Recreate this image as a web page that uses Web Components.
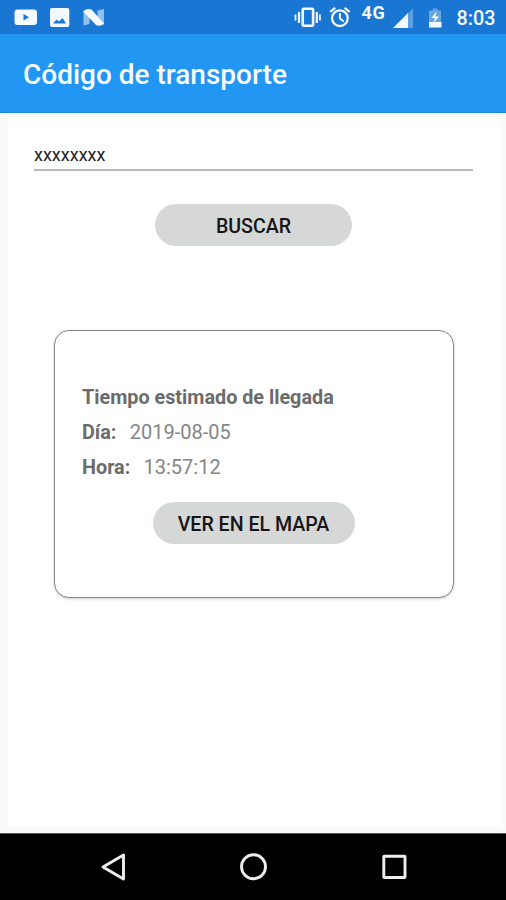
<!DOCTYPE html>
<html lang="es">
<head>
<meta charset="utf-8">
<title>Código de transporte</title>
<style>
body{margin:0;width:506px;height:900px;overflow:hidden;font-family:Roboto,"Noto Sans",sans-serif;background:#fafafa}
</style>
</head>
<body>
<transit-app></transit-app>
<script>
const define=(name,html)=>customElements.define(name,class extends HTMLElement{
  constructor(){super();this.attachShadow({mode:'open'}).innerHTML=html;}
});

define('status-bar',`<style>
:host{display:flex;height:34px;background:#1976d2;color:#f4f9ff;justify-content:space-between}
svg{display:block;flex:none}
.right{display:flex}
.net{font-size:18px;font-weight:700;line-height:26px;letter-spacing:.6px;width:29px}
.time{font-size:19.800px;font-weight:500;line-height:38px;width:49.500px}
</style>
<svg width="120" height="34" viewBox="0 0 120 34">
 <rect x="14.5" y="9.5" width="22.500" height="15.5" rx="3" fill="#f4f9ff"/><path d="M23.500 14v6.500l5.500-3.200z" fill="#1976d2"/>
 <rect x="50" y="8" width="19.300" height="19" rx="2" fill="#f4f9ff"/><path d="M53 23.500l3.500-4 2.500 2 3.500-3.500 3.500 5.500z" fill="#1976d2"/>
 <path d="M83.500 11h6v13l-6 1.500zM97.500 10.500l6.500-1.500v15.500h-6.500z" fill="#8fbfeb"/><path d="M83.500 11q3.500-3 8-1.500L104 23.500q-3.500 3.500-8 1.500L83.500 12z" fill="#f4f9ff"/>
</svg>
<div class="right">
<svg width="82" height="34" viewBox="280 0 82 34" fill="none" stroke="#f4f9ff">
 <rect x="302.700" y="8.700" width="10.400" height="17" rx="1" stroke-width="2.600"/><path d="M299 12v11M316.800 12v11" stroke-width="2.200"/><path d="M295.500 14.500v6M319.900 14.500v6" stroke-width="1.800"/>
 <circle cx="339.900" cy="18.200" r="7.800" stroke-width="2.300"/><path d="M339.900 13v5.500l4 3" stroke-width="2"/><path d="M330.200 11.800l5-4M349.600 11.800l-5-4" stroke-width="2.300"/>
</svg>
<div class="net">4G</div>
<svg width="66" height="34" viewBox="391 0 66 34">
 <path d="M407 14L413 8.500V28h-6z" fill="#5d9edf"/><path d="M393 28L408 13v15z" fill="#f4f9ff"/>
 <path d="M432.500 8.500h5v2h3.500v12h-12v-12h3.500z" fill="#68a6e2"/><path d="M429 22h12.500v5.500h-12.500z" fill="#f4f9ff"/><path d="M436.500 11.500l-5 6.500h3.500l-1.500 5 5.500-6.500h-3.500z" fill="#fff"/>
</svg>
<div class="time">8:03</div>
</div>`);

define('app-toolbar',`<style>
:host{display:flex;align-items:center;box-sizing:border-box;height:79px;padding:2px 23px 0;background:#2196f3;border-bottom:1px solid #1c86df;color:#f7fbff;font-size:28px;font-weight:500}
</style><slot></slot>`);

define('code-field',`<style>
:host{display:flex;align-items:flex-end;box-sizing:border-box;height:27px;padding-bottom:4px;border-bottom:2px solid #b9b9b9;color:#222;font-size:18px;line-height:20px}
</style><slot></slot>`);

define('pill-button',`<style>
:host{display:block}
button{display:block;width:100%;height:42px;padding:2px 0 0;border:0;border-radius:21px;background:#d6d8d7;color:#151515;font:500 19.600px Roboto,sans-serif;white-space:nowrap}
</style><button><slot></slot></button>`);

define('info-row',`<style>
:host{display:flex;height:35px;align-items:baseline;gap:13.300px;color:#858585;font-size:20px;line-height:35px;font-weight:400;white-space:nowrap}
::slotted(b){color:#6b6b6b;font-weight:700;font-size:19.800px}
</style><slot name="label"></slot><slot></slot>`);

define('arrival-card',`<style>
:host{display:flex;flex-direction:column;box-sizing:border-box;border:1.500px solid #858585;border-radius:15px;background:#fff;box-shadow:0 1px 3px #0003;padding:49px 27.500px 0}
pill-button{width:202px;margin:17px 0 0 70.500px}
</style>
<info-row><b slot="label">Tiempo estimado de llegada</b></info-row>
<info-row><b slot="label">Día:</b><span>2019-08-05</span></info-row>
<info-row><b slot="label">Hora:</b><span>13:57:12</span></info-row>
<pill-button>VER EN EL MAPA</pill-button>`);

define('nav-bar',`<style>
:host{display:flex;box-sizing:border-box;height:67px;background:#000;border-top:1px solid #555}
svg{display:block}
</style>
<svg width="506" height="66" viewBox="0 834 506 66" fill="none" stroke="#eee" stroke-width="2.900">
<path d="M103 867L123.500 855v24z" stroke-linejoin="round"/><circle cx="253.500" cy="866.800" r="12"/><rect x="383.800" y="856.300" width="21.200" height="21.200" rx=".5"/>
</svg>`);

define('transit-app',`<style>
:host{display:flex;flex-direction:column;height:900px}
main{flex:1;display:flex;flex-direction:column;box-sizing:border-box;margin:6px 6px 7px 8px;background:#fff;padding:25px 27px 0 26px}
.search{width:197px;margin:33px 0 0 121px}
arrival-card{width:400px;height:268px;margin:84px 0 0 19.500px}
</style>
<status-bar></status-bar>
<app-toolbar>Código de transporte</app-toolbar>
<main>
<code-field>xxxxxxxx</code-field>
<pill-button class="search">BUSCAR</pill-button>
<arrival-card></arrival-card>
</main>
<nav-bar></nav-bar>`);
</script>
</body>
</html>
